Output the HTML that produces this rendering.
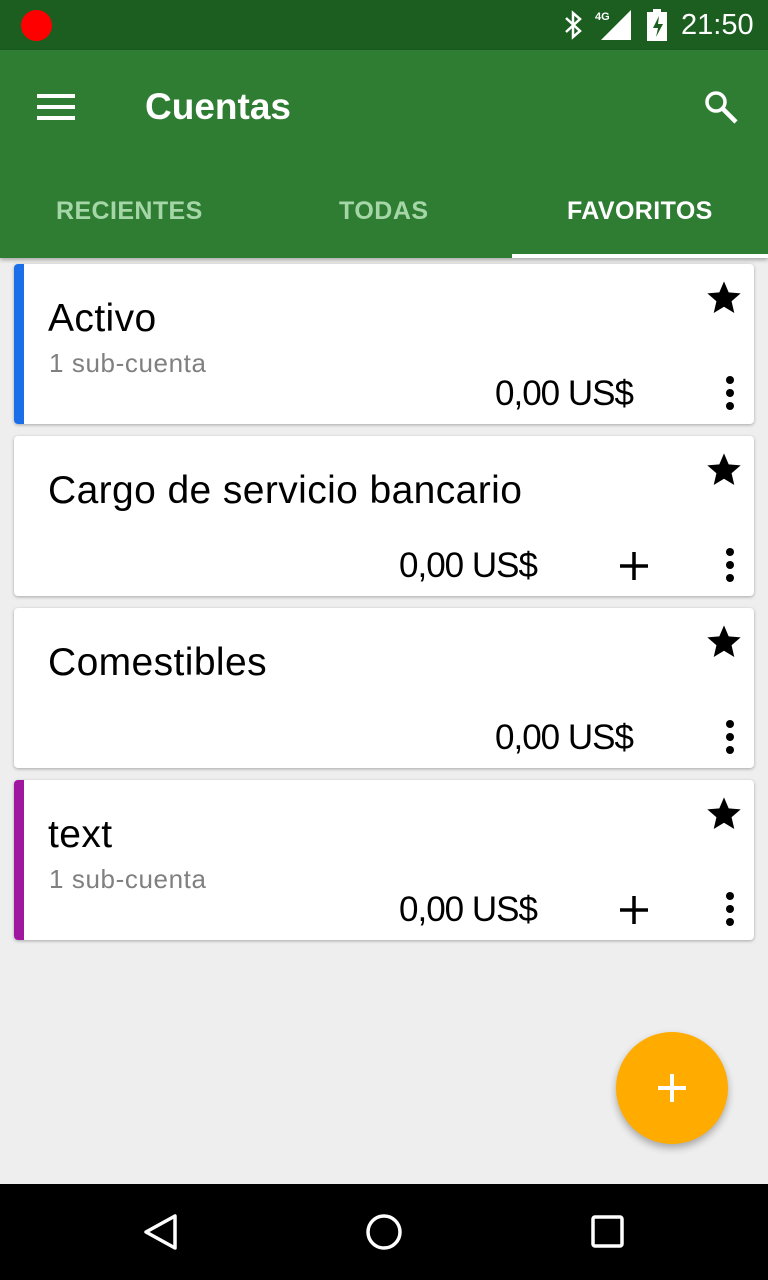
<!DOCTYPE html><html><head><style>
body{margin:0;width:768px;height:1280px;background:#eeeeee;font-family:"Liberation Sans",sans-serif;position:relative;overflow:hidden}
.sb{position:absolute;top:0;left:0;width:768px;height:50px;background:#1b5e20}
.tb{position:absolute;top:50px;left:0;width:768px;height:208px;background:#2e7d32;box-shadow:0 2px 4px rgba(0,0,0,.3)}
.tab{position:absolute;top:197px;font-size:25px;font-weight:bold;color:#a5d6a7}
.card{position:absolute;left:14px;width:740px;height:160px;background:#fff;border-radius:4px;box-shadow:0 1px 3px rgba(0,0,0,.3);overflow:hidden}
.bar{position:absolute;left:0;top:0;width:10px;height:100%}
.t{position:absolute;left:34px;top:33px;font-size:39px;color:#000;letter-spacing:.4px}
.s{position:absolute;left:35px;top:84px;font-size:26px;color:#808080;letter-spacing:.6px}
.a{position:absolute;top:110px;font-size:35px;color:#000;letter-spacing:-1px}
.star{position:absolute;left:690px;top:14px}
.dots{position:absolute;left:711px;top:112px}
.plus{position:absolute;left:604px;top:114px}
</style></head><body>
<div class="sb">
<div style="position:absolute;left:21px;top:10px;width:31px;height:31px;border-radius:50%;background:#f00"></div>
<svg style="position:absolute;left:560px;top:10px" width="26" height="30" viewBox="0 0 26 30"><path d="M6 8l14 13-7 6V3l7 6L6 22" fill="none" stroke="#fff" stroke-width="2.5"/></svg>
<div style="position:absolute;left:595px;top:11px;color:#fff;font-size:11px;font-weight:bold">4G</div>
<svg style="position:absolute;left:600px;top:10px" width="32" height="30"><path d="M31 0V30H1Z" fill="#fff"/></svg>
<svg style="position:absolute;left:646px;top:9px" width="22" height="32"><rect x="7" y="0" width="8" height="4" fill="#fff"/><rect x="1" y="3" width="20" height="29" fill="#fff"/><path d="M13 7l-6 12h5l-2 9 7-13h-5z" fill="#1b5e20"/></svg>
<div style="position:absolute;left:681px;top:9px;color:#fff;font-size:29px">21:50</div>
</div>
<div class="tb">
<svg style="position:absolute;left:37px;top:44px" width="38" height="26"><rect y="0" width="38" height="4" fill="#fff"/><rect y="11" width="38" height="4" fill="#fff"/><rect y="22" width="38" height="4" fill="#fff"/></svg>
<div style="position:absolute;left:145px;top:36px;color:#fff;font-size:37px;font-weight:bold">Cuentas</div>
<svg style="position:absolute;left:702px;top:38px" width="38" height="38"><circle cx="14" cy="14" r="9" fill="none" stroke="#fff" stroke-width="3.5"/><path d="M20 20l14 14" stroke="#fff" stroke-width="4.5"/></svg>
<div class="tab" style="left:56px;top:147px;letter-spacing:.4px">RECIENTES</div>
<div class="tab" style="left:339px;top:147px;letter-spacing:.5px">TODAS</div>
<div class="tab" style="left:567px;top:147px;color:#fff;letter-spacing:.4px">FAVORITOS</div>
<div style="position:absolute;left:512px;top:204px;width:256px;height:4px;background:#fff"></div>
</div>

<svg width="0" height="0" style="position:absolute"><defs>
<symbol id="st" viewBox="0 0 24 24"><path d="M12 17.27L18.18 21l-1.64-7.03L22 9.24l-7.19-.61L12 2 9.19 8.63 2 9.24l5.46 4.73L5.82 21z"/></symbol>
</defs></svg>

<div class="card" style="top:264px"><div class="bar" style="background:#1a6fe8"></div>
<div class="t">Activo</div><div class="s">1 sub-cuenta</div><div class="a" style="left:481px">0,00 US$</div>
<svg class="star" width="40" height="40"><use href="#st"/></svg>
<svg class="dots" width="10" height="34"><circle cx="5" cy="4" r="4"/><circle cx="5" cy="17" r="4"/><circle cx="5" cy="30" r="4"/></svg></div>

<div class="card" style="top:436px">
<div class="t">Cargo de servicio bancario</div><div class="a" style="left:385px">0,00 US$</div>
<svg class="plus" width="32" height="32"><path d="M16 2V30M2 16H30" stroke="#000" stroke-width="3.5"/></svg>
<svg class="star" width="40" height="40"><use href="#st"/></svg>
<svg class="dots" width="10" height="34"><circle cx="5" cy="4" r="4"/><circle cx="5" cy="17" r="4"/><circle cx="5" cy="30" r="4"/></svg></div>

<div class="card" style="top:608px">
<div class="t">Comestibles</div><div class="a" style="left:481px">0,00 US$</div>
<svg class="star" width="40" height="40"><use href="#st"/></svg>
<svg class="dots" width="10" height="34"><circle cx="5" cy="4" r="4"/><circle cx="5" cy="17" r="4"/><circle cx="5" cy="30" r="4"/></svg></div>

<div class="card" style="top:780px"><div class="bar" style="background:#a0179f"></div>
<div class="t">text</div><div class="s">1 sub-cuenta</div><div class="a" style="left:385px">0,00 US$</div>
<svg class="plus" width="32" height="32"><path d="M16 2V30M2 16H30" stroke="#000" stroke-width="3.5"/></svg>
<svg class="star" width="40" height="40"><use href="#st"/></svg>
<svg class="dots" width="10" height="34"><circle cx="5" cy="4" r="4"/><circle cx="5" cy="17" r="4"/><circle cx="5" cy="30" r="4"/></svg></div>

<div style="position:absolute;left:616px;top:1032px;width:112px;height:112px;border-radius:50%;background:#ffab00;box-shadow:0 4px 8px rgba(0,0,0,.3)">
<svg style="position:absolute;left:40px;top:40px" width="32" height="32"><path d="M16 2V30M2 16H30" stroke="#fff" stroke-width="4"/></svg></div>

<div style="position:absolute;left:0;top:1184px;width:768px;height:96px;background:#000">
<svg style="position:absolute;left:140px;top:28px" width="40" height="40"><path d="M35 4V36L6 20Z" fill="none" stroke="#fff" stroke-width="3.5" stroke-linejoin="round"/></svg>
<svg style="position:absolute;left:364px;top:28px" width="40" height="40"><circle cx="20" cy="20" r="16" fill="none" stroke="#fff" stroke-width="3.5"/></svg>
<svg style="position:absolute;left:590px;top:30px" width="36" height="36"><rect x="3" y="3" width="29" height="29" rx="2" fill="none" stroke="#fff" stroke-width="3.5"/></svg>
</div>
</body></html>
